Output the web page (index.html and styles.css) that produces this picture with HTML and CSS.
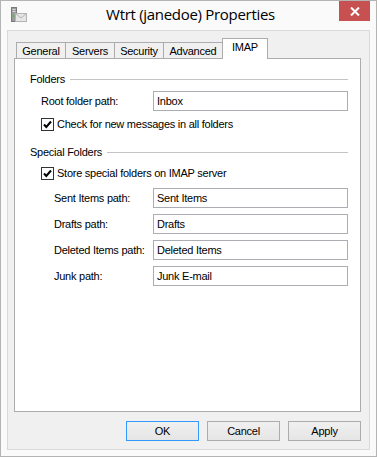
FILE: index.html
```html
<!DOCTYPE html>
<html lang="en">
<head>
    <meta charset="UTF-8">
    <title>Wtrt (janedoe) Properties</title>
    <link rel="stylesheet" href="styles.css">
</head>
<body>
    <div class="window">
        <div class="titlebar">
            <div class="app-icon">
                <svg width="16" height="16" viewBox="0 0 16 16">
                    <rect x="0.5" y="0.5" width="5" height="14" fill="#9a9a9a" stroke="#7a7a7a"/>
                    <rect x="1.5" y="2" width="3" height="1" fill="#d8d8d8"/>
                    <rect x="1.5" y="4" width="3" height="1" fill="#d8d8d8"/>
                    <rect x="1.5" y="8" width="2" height="2" fill="#5cb85c"/>
                    <rect x="4.5" y="6.5" width="11" height="8" fill="#e6e6e6" stroke="#b4b4b4"/>
                    <path d="M4.5 6.5 L10 11 L15.5 6.5" fill="none" stroke="#b4b4b4"/>
                </svg>
            </div>
            <div class="title">Wtrt (janedoe) Properties</div>
            <div class="close-btn">
                <svg width="10" height="9" viewBox="0 0 10 9">
                    <path d="M1 0.5 L9 8.5 M9 0.5 L1 8.5" stroke="#fff" stroke-width="2"/>
                </svg>
            </div>
        </div>

        <div class="client">
            <div class="tabs">
                <div class="tab tab-general">General</div>
                <div class="tab tab-servers">Servers</div>
                <div class="tab tab-security">Security</div>
                <div class="tab tab-advanced">Advanced</div>
                <div class="tab tab-imap active">IMAP</div>
            </div>

            <div class="panel">
                <div class="group-title"><span>Folders</span><div class="rule"></div></div>
                <div class="field">
                    <label>Root folder path:</label>
                    <div class="textbox">Inbox</div>
                </div>
                <div class="check-row">
                    <span class="checkbox">
                        <svg width="11" height="11" viewBox="0 0 11 11"><path d="M2 5.5 L4.3 8 L9 2.5" fill="none" stroke="#000" stroke-width="2"/></svg>
                    </span>
                    <span>Check for new messages in all folders</span>
                </div>

                <div class="group-title special"><span>Special Folders</span><div class="rule"></div></div>
                <div class="check-row">
                    <span class="checkbox">
                        <svg width="11" height="11" viewBox="0 0 11 11"><path d="M2 5.5 L4.3 8 L9 2.5" fill="none" stroke="#000" stroke-width="2"/></svg>
                    </span>
                    <span>Store special folders on IMAP server</span>
                </div>
                <div class="sub-fields">
                    <div class="field">
                        <label>Sent Items path:</label>
                        <div class="textbox">Sent Items</div>
                    </div>
                    <div class="field">
                        <label>Drafts path:</label>
                        <div class="textbox">Drafts</div>
                    </div>
                    <div class="field">
                        <label>Deleted Items path:</label>
                        <div class="textbox">Deleted Items</div>
                    </div>
                    <div class="field">
                        <label>Junk path:</label>
                        <div class="textbox">Junk E-mail</div>
                    </div>
                </div>
            </div>

            <div class="buttons">
                <button class="btn default">OK</button>
                <button class="btn">Cancel</button>
                <button class="btn">Apply</button>
            </div>
        </div>
    </div>
</body>
</html>
```

FILE: styles.css
```css
* {
    margin: 0;
    padding: 0;
    box-sizing: border-box;
}

body {
    font-family: 'Liberation Sans', Arial, sans-serif;
    font-size: 11px;
    letter-spacing: -0.25px;
    color: #000;
    background: #fff;
}

.window {
    width: 377px;
    height: 457px;
    border: 1px solid #b4b4b4;
    background: #fafafa;
    padding: 0 6px 6px 6px;
    display: flex;
    flex-direction: column;
}

/* title bar */
.titlebar {
    height: 29px;
    margin: 0 -6px;
    padding: 0 6px 0 10px;
    display: grid;
    grid-template-columns: 1fr auto 1fr;
    align-items: start;
}

.app-icon {
    padding-top: 6px;
    justify-self: start;
}

.app-icon svg {
    display: block;
}

.title {
    font-family: 'Open Sans', 'Liberation Sans', sans-serif;
    font-size: 15px;
    letter-spacing: -0.3px;
    color: #000;
    padding-top: 3px;
    text-align: center;
}

.close-btn {
    justify-self: end;
    width: 31px;
    height: 20px;
    background: #c75050;
    display: flex;
    align-items: center;
    justify-content: center;
}

/* client area */
.client {
    flex: 1;
    border: 1px solid #d9d9d9;
    background: #f0f0f0;
    padding: 7px 8px 8px 6px;
    display: flex;
    flex-direction: column;
}

.tabs {
    display: flex;
    align-items: flex-end;
    padding-left: 2px;
    height: 20px;
    position: relative;
    z-index: 1;
}

.tab {
    height: 16px;
    border: 1px solid #acacac;
    border-bottom: none;
    margin-right: -1px;
    background: #f0f0f0;
    display: flex;
    align-items: center;
    justify-content: center;
    line-height: 1;
    padding-top: 1px;
}

.tab-general { width: 50px; }
.tab-servers { width: 50px; }
.tab-security { width: 50px; }
.tab-advanced { width: 60px; }

.tab.active {
    width: 46px;
    height: 21px;
    margin-bottom: -1px;
    background: #fff;
    padding-top: 0;
    padding-bottom: 4px;
}

.panel {
    height: 354px;
    border: 1px solid #acacac;
    background: #fff;
    padding: 13px 12px 0 15px;
}

.group-title {
    display: flex;
    align-items: center;
    height: 14px;
}

.group-title .rule {
    flex: 1;
    border-top: 1px solid #c4c4c4;
    margin-left: 5px;
    margin-top: 1px;
}

.group-title.special {
    margin-top: 14px;
}

.field {
    display: flex;
    align-items: center;
    height: 20px;
    margin-top: 6px;
    padding-left: 11px;
}

.group-title + .field {
    margin-top: 5px;
}

.field label {
    width: 112px;
}

.textbox {
    width: 195px;
    height: 20px;
    border: 1px solid #abadb3;
    background: #fff;
    padding: 0 3px;
    display: flex;
    align-items: center;
}

.check-row {
    display: flex;
    align-items: center;
    gap: 3px;
    height: 14px;
    margin-top: 6px;
    padding-left: 11px;
}

.group-title + .check-row {
    margin-top: 7px;
}

.checkbox {
    width: 13px;
    height: 13px;
    border: 1px solid #333;
    background: #fff;
    display: flex;
    align-items: center;
    justify-content: center;
}

.sub-fields .field {
    padding-left: 24px;
}

.sub-fields .field label {
    width: 99px;
}

.sub-fields .field:first-child {
    margin-top: 8px;
}

/* bottom buttons */
.buttons {
    display: flex;
    justify-content: flex-end;
    gap: 8px;
    margin-top: 9px;
}

.btn {
    width: 73px;
    height: 20px;
    font-family: inherit;
    font-size: 11px;
    letter-spacing: inherit;
    color: #000;
    border: 1px solid #acacac;
    background: linear-gradient(#f0f0f0, #e5e5e5);
}

.btn.default {
    border-color: #3399ff;
}
```
